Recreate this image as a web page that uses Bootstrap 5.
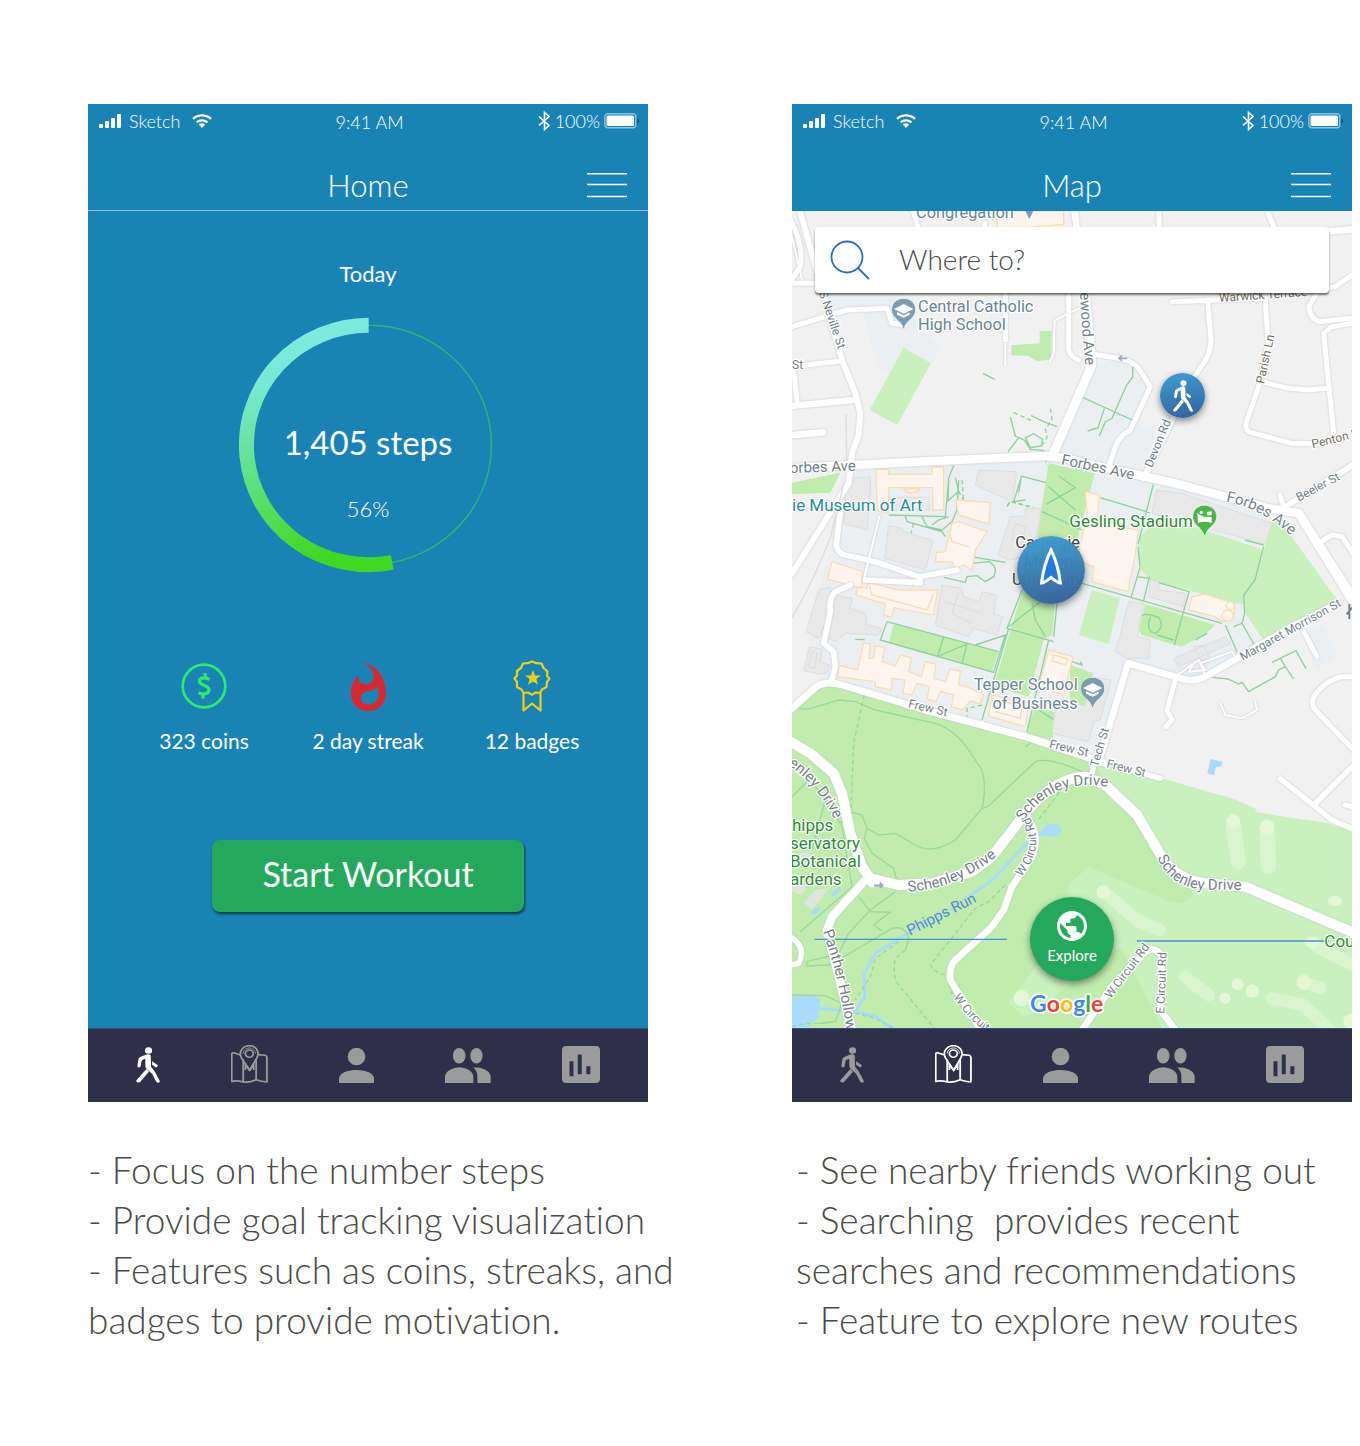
<!DOCTYPE html>
<html lang="en">
<head>
<meta charset="utf-8">
<meta name="viewport" content="width=device-width, initial-scale=1">
<title>Workout app screens</title>
<link href="https://cdn.jsdelivr.net/npm/bootstrap@5.3.0/dist/css/bootstrap.min.css" rel="stylesheet">
<style>
  body { font-family: Lato, "Open Sans", sans-serif; font-variant-ligatures: none; background: #fff; color: #4a4a4a; }
  svg { display: block; }
  .board { gap: 144px; padding: 104px 8px 96px 88px; }
  .board > section { flex: 1 1 0; min-width: 0; }
  .screen { background: #1a83b6; color: #fff; }
  .topbar { height: 107px; }
  .topbar-line { border-bottom: 1px solid #8cc4e0; }
  .status { font-size: 18px; font-weight: 300; line-height: 30px; padding: 0 8px 0 11px; }
  .status-side { flex: 1 1 0; }
  .status-time { padding-top: 3px; }
  .title-row { padding: 30px 21px 0; }
  .title-row h1 { font-size: 31px; font-weight: 300; line-height: 36px; }
  .title-row button, .title-side { width: 40px; }
  .pane { height: 817px; }
  .today { font-size: 22px; line-height: 28px; padding-top: 49px; }
  .ring { width: 260px; margin-top: 29px; }
  .ring-text { padding-top: 104px; }
  .steps { font-size: 33px; line-height: 42px; }
  .percent { font-size: 22px; font-weight: 300; line-height: 28px; padding-top: 32px; }
  .stats { padding: 136px 34px 0; }
  .stats span { font-size: 21px; line-height: 28px; }
  .stat-icon { height: 54px; margin-bottom: 14px; }
  .start { width: 312px; height: 72px; margin-top: 85px; padding: 0 0 4px; font-size: 34px; line-height: 40px; color: #fff; background: #24a85c; border: 0; border-radius: 8px; box-shadow: 1px 2px 3px rgba(0,0,0,.6); }
  .tabs { height: 74px; background: #302f4a; padding: 0 48px 19px; border-top: 1px solid #235b80; color: #9b9b9b; }
  .tabs a { color: inherit; }
  .tabs a.active { color: #fff; }
  .notes { font-size: 37px; font-weight: 300; line-height: 50px; padding-top: 43px; }
  .search { height: 66px; margin: 16px 23px; padding-left: 15px; background: #fff; border-radius: 4px; box-shadow: 0 2px 2px rgba(0,0,0,.55); }
  .search input { border: 0; box-shadow: none; font-size: 28px; font-weight: 300; color: #4a4a4a; padding: 0 0 2px 29px; background: transparent; }
  .search input::placeholder { color: #4a4a4a; opacity: 1; }
  .pin { border: 0; padding: 0; color: #fff; border-radius: 50%; background: linear-gradient(170deg, #3f9fd2, #32609c); box-shadow: 0 3px 7px rgba(0,0,0,.45); }
  .pin-friend { width: 45px; height: 45px; left: 368px; top: 162px; }
  .pin-me { width: 68px; height: 68px; left: 225px; top: 325px; background: linear-gradient(170deg, rgba(61,160,212,.96), rgba(50,90,150,.96)); }
  .pin-explore { width: 84px; height: 84px; left: 50%; margin-left: -42px; bottom: 47px; padding-bottom: 5px; background: #24a85c; font-size: 15px; line-height: 22px; }
  .map text { font-family: Roboto, sans-serif; paint-order: stroke; stroke: #fff; stroke-width: 7px; stroke-linejoin: round; fill: #73818a; }
  .map .lbl { font-size: 45px; }
  .map .street { font-size: 36px; }
  .map .place { font-size: 49px; fill: #6b8594; }
  .map .lane { font-size: 36px; fill: #756c61; }
  .map .park { font-size: 51px; fill: #2f8a35; }
  .map .museum { fill: #2a8c94; }
  .map .campus { font-size: 49px; fill: #444; }
  .map .run { fill: #5686dc; stroke: #c0ecae; }
  .map .google { font-size: 69px; font-family: Lato, sans-serif; font-weight: 700; stroke-width: 10px; }
  .roads { fill: none; stroke: #fff; stroke-linejoin: round; stroke-linecap: round; filter: drop-shadow(0 0 3px #c4c4cc); }
  .trail { fill: none; stroke: #8fd09b; stroke-width: 4px; }
  .trail-soft { fill: none; stroke: #9cd79a; stroke-width: 4px; }
  .dash { stroke-dasharray: 13 9; }
  .grey { fill: #e9e9ea; stroke: #dededf; stroke-width: 3px; }
  .cream { fill: #fef6ee; stroke: #fcdcb6; stroke-width: 4px; }
  .deep { fill: #c0ecae; }
  .pale { fill: #c9f0bd; }
  .quad { fill: #ebeff2; }
  .water { fill: #aadaff; }
  .tee { fill: #e5f8d5; }
</style>
<script src="https://cdn.jsdelivr.net/npm/bootstrap@5.3.0/dist/js/bootstrap.bundle.min.js"></script>
</head>
<body>
<svg width="0" height="0" class="position-absolute" aria-hidden="true">
  <defs>
    <symbol id="i-signal" viewBox="0 0 22 14"><g fill="currentColor"><rect y="10" width="4" height="4" rx="1"/><rect x="6" y="7" width="4" height="7" rx="1"/><rect x="12" y="4" width="4" height="10" rx="1"/><rect x="18" width="4" height="14" rx="1"/></g></symbol>
    <symbol id="i-wifi" viewBox="0 0 20 14"><path d="M1 4.800A13.500 13.500 0 0 1 19 4.800M4.500 8.300A8.500 8.500 0 0 1 15.500 8.300" fill="none" stroke="currentColor" stroke-width="2.300"/><path d="M6.800 10.600a5 5 0 0 1 6.400 0L10 14z" fill="currentColor"/></symbol>
    <symbol id="i-bt" viewBox="0 0 13 20"><path d="M1 5.500 11 14.500 6.500 18.500V1.500L11 5.500 1 14.500" fill="none" stroke="currentColor" stroke-width="1.600"/></symbol>
    <symbol id="i-battery" viewBox="0 0 36 16"><rect x=".8" y=".8" width="31" height="14" rx="3" fill="none" stroke="#8cc4e0" stroke-width="1.400"/><rect x="2.500" y="2.500" width="27.500" height="10.600" rx="1.500" fill="#fff"/><path d="M33.500 5.500c2 .6 2 4.400 0 5z" fill="#0d415b"/></symbol>
    <symbol id="i-menu" viewBox="0 0 40 26"><path d="M0 1.800H40M0 12.500H40M0 24.500H40" stroke="#fff" stroke-width="1.600"/></symbol>
    <symbol id="i-walk" viewBox="134 80 67 108" preserveAspectRatio="none"><circle cx="169" cy="90.500" r="10"/><path d="M161 103Q169 99 175 105L176 139L185 151Q190 160 200 181Q202 187 196 187Q191 187 189 181L179 160L164 146Q160 142 160 136V115L150 120L147 138Q145 142 141 141Q137 140 138 135L141 116Q142 112 146 110ZM179 123 193 133Q196 136 193 140Q191 142 187 139L179 133ZM163 146 170 154 146 184Q142 188 137 186Q133 183 136 179Z"/></symbol>
    <symbol id="i-map" viewBox="400 74 103 115" preserveAspectRatio="none"><g fill="none" stroke="currentColor" stroke-width="5" stroke-linejoin="round"><path d="M427 104 409 98Q402 96 402 103V184Q418 180 434 186Q452 188 470 179Q484 184 500 186V112Q500 107 495 105L474 103M434 118V186M470 118V179"/><path d="M452 151 429 113Q422 97 431 86Q438 76 451 76Q464 76 471 86Q479 98 472 113Z"/><circle cx="451" cy="100" r="11"/><path d="M434 100a17 17 0 0 1 34 0" stroke-width="2.500"/><path d="M440 150V132L452 151 463 132V150"/></g></symbol>
    <symbol id="i-person" viewBox="702 84 97 104" preserveAspectRatio="none"><ellipse cx="750.500" cy="109.500" rx="24.500" ry="26"/><path d="M702 188V174C704 155 730 149 751 149C773 149 798 157 799 174V188Z"/></symbol>
    <symbol id="i-group" viewBox="999 84 128 104" preserveAspectRatio="none"><ellipse cx="1038.500" cy="107" rx="17.500" ry="23"/><ellipse cx="1086.500" cy="107" rx="17" ry="23"/><path d="M999 188V168C1001 150 1022 142 1039 141C1056 142 1076 151 1078 168V188ZM1089 188V168Q1089 152 1078 141C1099 141 1125 150 1126 168V188Z"/></symbol>
    <symbol id="i-chart" viewBox="1329 78 106 110" preserveAspectRatio="none"><path fill-rule="evenodd" d="M1341 78H1423Q1435 78 1435 90V176Q1435 188 1423 188H1341Q1329 188 1329 176V90Q1329 78 1341 78ZM1350 123V168H1361V123ZM1373 103V162H1384V103ZM1397 138V162H1408V138Z"/></symbol>
    <symbol id="m-school" viewBox="0 0 70 92"><path d="M35 0C12 0 0 16 0 33C0 58 27 62 35 90C43 62 70 58 70 33C70 16 58 0 35 0Z" fill="#7a9db3"/><path d="M6 31 35 16 64 31 35 45ZM15 40 35 50 53 41V48L35 57 15 48Z" fill="#fff"/></symbol>
  </defs>
</svg>

<main class="board d-flex">
  <section>
    <div class="screen">
      <header class="topbar topbar-line">
        <div class="status d-flex text-nowrap">
          <div class="status-side d-flex align-items-center gap-2"><svg width="22" height="14"><use href="#i-signal"/></svg><span>Sketch</span><svg class="ms-1" width="20" height="14"><use href="#i-wifi"/></svg></div>
          <div class="status-time">9:41 AM</div>
          <div class="status-side d-flex align-items-center justify-content-end gap-1"><svg width="13" height="20"><use href="#i-bt"/></svg><span>100%</span><svg width="36" height="16"><use href="#i-battery"/></svg></div>
        </div>
        <div class="title-row d-flex align-items-center justify-content-between">
          <span class="title-side"></span><h1 class="m-0">Home</h1><button class="btn p-0 border-0" aria-label="Menu"><svg width="40" height="26"><use href="#i-menu"/></svg></button>
        </div>
      </header>
      <div class="pane d-flex flex-column align-items-center">
        <div class="today">Today</div>
        <div class="ring position-relative text-center">
          <svg class="position-absolute top-0 start-0" width="260" height="256" viewBox="238 317 260 256" aria-hidden="true">
            <defs><linearGradient id="arc" x1=".2" y1="0" x2=".45" y2="1"><stop offset="0" stop-color="#82ece6"/><stop offset=".2" stop-color="#7ae8d4"/><stop offset=".9" stop-color="#46da33"/><stop offset="1" stop-color="#40d822"/></linearGradient></defs>
            <path d="M368.700 325.300A122.500 119.700 0 0 1 392.300 562.500" fill="none" stroke="#2bb673" stroke-width="1.500"/>
            <path d="M368.700 325.300A122.500 119.700 0 1 0 392.300 562.500" fill="none" stroke="url(#arc)" stroke-width="15"/>
          </svg>
          <div class="ring-text position-relative"><div class="steps">1,405 steps</div><div class="percent">56%</div></div>
        </div>
        <div class="stats w-100"><div class="row g-0 text-center">
          <div class="col"><div class="stat-icon d-flex justify-content-center align-items-center">
            <svg width="46" height="46" viewBox="0 0 46 46" fill="none" stroke="#2deb6a"><circle cx="23" cy="23" r="21.300" stroke-width="2.700"/><path d="M28.500 16.500C23 13.500 18 15 18.500 18.800C19 22.800 27.800 22 28 27C28 31 22 32 17.500 29.800M24.200 10V15M22 31V35.500" stroke-width="3.200"/></svg></div><span>323 coins</span></div>
          <div class="col"><div class="stat-icon d-flex justify-content-center align-items-center">
            <svg width="35" height="49" viewBox="636 59 104 147" preserveAspectRatio="none"><path fill="#d8282f" fill-rule="evenodd" d="M671 59C711 69 740 104 740 152C740 185 718 206 688 206C657 206 636 185 636 155C636 132 643 114 658 99C656 116 664 126 680 126C692 126 702 119 703 105C703 88 692 70 671 59ZM715 131C705 147 691 144 677 150C669 154 665 160 665 168C666 179 675 186 688 186C704 186 716 176 718 160Q719 146 715 131Z"/></svg></div><span>2 day streak</span></div>
          <div class="col"><div class="stat-icon d-flex justify-content-center align-items-center">
            <svg width="38" height="52" viewBox="0 0 38 52" fill="none" stroke="#f1d011" stroke-width="2.200" stroke-linejoin="round"><path d="M19 1.500 23.500 3.200 28.500 3.500 30.500 8 34.500 11.500 34 16 36.500 18.500 34 22 33.500 27 29 29.500 27 33 22.500 32.500 19 34.800 15 32.500 10.500 33 8.500 29.500 4 27 4 22 1.500 18.500 4 15.500 4 11 8 8 10 3.500 14.500 3.200ZM10.500 33V50.500L19 43.500 27.500 50.500V33"/><path d="M20 10 22 15.500H28L23.300 19 25 24.700 20 21.400 15 24.700 16.700 19 12 15.500H18Z" fill="#ebcf18" stroke="none"/></svg></div><span>12 badges</span></div>
        </div></div>
        <button class="start btn">Start Workout</button>
      </div>
      <nav class="tabs d-flex justify-content-between align-items-end" aria-label="Home tabs">
        <a href="#" class="active" aria-label="Workout"><svg width="24" height="36" fill="currentColor"><use href="#i-walk"/></svg></a>
        <a href="#" aria-label="Map"><svg width="37" height="38"><use href="#i-map"/></svg></a>
        <a href="#" aria-label="Profile"><svg width="35" height="35" fill="currentColor"><use href="#i-person"/></svg></a>
        <a href="#" aria-label="Friends"><svg width="46" height="35" fill="currentColor"><use href="#i-group"/></svg></a>
        <a href="#" aria-label="Stats"><svg width="38" height="37" fill="currentColor"><use href="#i-chart"/></svg></a>
      </nav>
    </div>
    <div class="notes text-nowrap">- Focus on the number steps<br>- Provide goal tracking visualization<br>- Features such as coins, streaks, and<br>badges to provide motivation.</div>
  </section>

  <section>
    <div class="screen">
      <header class="topbar">
        <div class="status d-flex text-nowrap">
          <div class="status-side d-flex align-items-center gap-2"><svg width="22" height="14"><use href="#i-signal"/></svg><span>Sketch</span><svg class="ms-1" width="20" height="14"><use href="#i-wifi"/></svg></div>
          <div class="status-time">9:41 AM</div>
          <div class="status-side d-flex align-items-center justify-content-end gap-1"><svg width="13" height="20"><use href="#i-bt"/></svg><span>100%</span><svg width="36" height="16"><use href="#i-battery"/></svg></div>
        </div>
        <div class="title-row d-flex align-items-center justify-content-between">
          <span class="title-side"></span><h1 class="m-0">Map</h1><button class="btn p-0 border-0" aria-label="Menu"><svg width="40" height="26"><use href="#i-menu"/></svg></button>
        </div>
      </header>
      <div class="pane position-relative overflow-hidden">
        <svg class="map position-absolute top-0 start-0 w-100 h-100" viewBox="0 0 1680 2451" preserveAspectRatio="xMidYMid slice">
          <rect width="1680" height="2451" fill="#f1f1f1"/>
          <!-- campus ground -->
          <g class="quad">
            <path d="M110 250H330L380 345 450 407 400 485 265 490 240 407 210 300 110 297Z"/>
            <path d="M894 457 1024 447 1079 527 1014 667 944 767 784 747ZM994 680 1014 635 1094 647 1054 790 950 767Z"/>
            <path d="M165 770 770 745 1050 800 1440 910 1420 1000 1354 1207 1400 1290 1340 1350 1210 1410 1000 1360 910 1620 700 1560 110 1410 40 1330 80 1150 140 900Z"/>
            <path d="M1524 1257 1594 1247 1639 1332 1574 1377Z"/>
          </g>
          <!-- park -->
          <path class="pale" d="M0 1507 75 1427 120 1417 770 1602 1109 1702 1334 1767 1389 1792 1394 1804 1609 1837 1680 1862V2451H0Z"/>
          <path class="deep" d="M0 1507 75 1427 120 1417 770 1602 900 1640 934 1707 1044 1817 1204 2047Q1190 2085 1134 2072L889 1967 834 2017 780 2200 650 2377 700 2420 984 2207 1034 2297 1110 2451H0Z"/>
          <path class="pale" d="M335 410 417 457 315 642 233 597ZM1039 1027 1044 977 1074 947 1134 927 1234 957 1414 1017 1389 1107 1354 1152 1356 1182 1074 1107 1044 1072ZM1434 937 1459 922 1634 1165 1414 1287 1359 1207 1356 1152 1389 1107 1419 1007ZM899 1137 984 1162 949 1299 861 1272Z"/>
          <path class="deep" d="M658 403 743 397V360H778V445L735 451 710 435 658 433ZM0 815 145 785 115 845 0 850Z"/>
          <g transform="translate(0 807)"><path class="deep" d="M770-50 908-20 855 180 870 330 790 370 780 465 755 480 710 650 605 620 690 335 735 170ZM730 680 800 700 780 780 700 760ZM305 432 620 515 600 575 290 490ZM834 555 904 580 874 690 834 680ZM1059 372 1269 435 1244 460 1169 500 1049 465 1041 450Z"/></g>
          <!-- golf course -->
          <g transform="translate(834 1617)">
            <path d="M490 230 505 335M592 250 595 350" stroke="#d9f4cf" stroke-width="46" stroke-linecap="round" fill="none"/>
            <path d="M120 440 200 510 270 540M345 680 415 735M605 745 700 765 790 850M705 700 750 712M740 590 860 650" stroke="#d9f4cf" stroke-width="38" stroke-linecap="round" fill="none"/>
            <g class="tee"><circle cx="490" cy="214" r="21"/><circle cx="591" cy="232" r="23"/><circle cx="100" cy="426" r="21"/><circle cx="503" cy="703" r="18"/><circle cx="547" cy="723" r="20"/><circle cx="465" cy="745" r="17"/><circle cx="702" cy="697" r="22"/><ellipse cx="795" cy="453" rx="22" ry="15"/><ellipse cx="728" cy="577" rx="24" ry="17"/><circle cx="845" cy="815" r="25"/><circle cx="-145" cy="745" r="24"/></g>
          </g>
          <!-- water -->
          <g transform="translate(0 1617)">
            <path class="water" d="M0 740 70 738 85 750 80 800 50 830 0 835ZM745 248 765 222 800 225 812 242 790 260 750 258ZM1256 27 1292 35 1287 50 1272 50 1266 76 1246 70ZM116 432 140 410 148 420 124 442ZM56 488 80 467 88 476 66 497Z"/>
            <path d="M750 248 715 270 600 390 480 475 340 555 250 610 217 670 218 740 190 785 80 775M190 785 250 800 310 840" fill="none" stroke="#aadaff" stroke-width="9"/>
          </g>
          <!-- footpaths -->
          <g class="trail-soft" transform="translate(0 1617)">
            <path d="M20-125 45-122 140-150 190-145 250-120 430-80Q490-60 530 0L570 60Q585 110 570 175L490 270Q420 315 370 285L310 250 260 255 225 235 210 195 180 187 145 220M570 175 590 168 730 35Q770 20 870 65M225 235 217 265 240 310 305 355 315 395M45 75 100 150 150 230 180 410 25 545M0 140 45 95M100 150 60 300M310 425 235 480 170 550 140 610 45 635 45 648 110 645 190 600 300 535Q345 525 350 570L340 600M200 440 235 485 295 487 250 520 245 525 270 543M0 735 100 737 150 760 130 815 80 820M700-10 730-30 790-25 870 10"/>
            <path class="dash" d="M217-165 185-20 177 180M815 110 735 215M640 405 590 455 550 475 415 645Q430 670 465 675L480 735 570 850M320 575 250 625 235 680 190 750M340 600 310 625Q300 680 320 705L440 850M190 790 250 805 310 840M0 830 40 820 110 820"/>
          </g>
          <g class="trail">
            <path d="M573 487 608 505M655 618 670 675 680 680 648 722M680 680 698 688 715 715 755 718M720 615 755 632 795 647M700 680 725 668 752 685 748 705 715 710ZM486 762 470 800 468 870 500 840 490 800M680 845 688 795 762 815M800 795 850 830 762 880M867 557 1021 627M1022 467 1022 498 1004 522 960 622 940 632 922 675M937 592 918 650 887 660M1084 820 1038 1000M925 860 1074 905"/>
            <path class="dash" d="M665 605 715 627 720 612M775 593 780 625 760 655 765 680 745 710M755 720 765 765M500 840 515 870M645 885 655 870 725 890"/>
            <g transform="translate(0 807)"><path d="M290 105 460 110 470 0M340 108 345 125 450 155 460 170M390 110 405 140 450 150 480 125 495 90 500 0M420 135 440 120 470 110M525 228 640 247M540 250 590 245Q620 260 605 290L580 305 555 287 525 290 520 307 455 292M285 425 265 480 605 577 640 465 550 495M285 425 620 515M455 470 437 530 525 492 510 550M190 478 218 479M690 330 645 445 785 485M700 60 665 65 685 0M650 440 790 330M720 370 730 420 760 470M650 445 570 720M770 480 705 755M740 690 795 725M785 470 795 370M750 95 870 150M770 20 850 90M1074 300 1191 335 1147 495M870 310 1290 430M1044 262 1018 350M1072 290 1055 362M1034 290 1074 295M1044 260 1038 200M1359 180 1415 195M1415 200 1389 300 1355 345 1358 400 1350 430 1325 440M1045 410Q1055 395 1100 412Q1120 440 1090 460Q1060 455 1075 410M1095 465 1145 480M1300 435 1335 515M1350 430 1387 495M1210 480 1245 460M1262 592 1307 597 1340 612 1350 607 1370 635 1450 590 1460 570 1480 560 1465 535 1440 547 1512 512 1542 566M1480 560 1505 597M840 545 870 555 865 545"/><path class="dash" d="M510 0 515 60M645 80 655 65 715 80M365 130 357 160M570 675 525 685 525 710"/></g>
          </g>
          <!-- buildings -->
          <g class="cream">
            <path d="M615 0V50L725 48 815 40V0ZM252 775H290V790H420V768H455V897H422V830H290V905L255 900Z"/>
            <g transform="translate(0 807)">
              <path d="M335 27a27 20 0 0 0 48 0ZM120 245 212 275 207 325 107 297ZM197 320 225 325 228 308 320 330 437 330 425 405 305 383 300 412 275 405 280 372 192 345ZM492 60 595 68 590 132 500 105ZM480 130 500 125 585 155 550 210 540 270 515 255 490 265 480 245 430 245 433 218 460 215Z"/>
              <path d="M215 488 235 492 230 535 245 535 250 497 278 503 270 545 310 558 325 525 358 533 350 575 388 590 400 545 432 553 425 595 460 605 475 567 505 573 500 615 530 622 575 645 565 672 535 662 512 690 478 680 485 645 445 633 432 665 405 658 412 620 375 610 360 645 333 640 340 600 300 595 298 630 250 620 250 605 135 590 142 557 197 570Z"/>
              <path d="M600 645 710 672 700 740 590 708ZM770 510 843 530 815 645 740 620Z"/>
              <path d="M880 35 923 45 915 130 1040 150 1028 235 1020 270 1008 335 900 305 905 260 855 240 885 100ZM1200 350 1240 342 1330 372 1325 410Q1300 440 1270 410L1190 390Z"/><circle cx="1307" cy="407" r="17"/><circle cx="1315" cy="377" r="12"/>
              <path d="M230 310 240 345 405 390 425 340M620 660 690 680 685 715 610 695M785 525 828 537 820 555 780 543ZM470 150 480 185 530 200" fill="none"/>
            </g>
          </g>
          <g class="grey" transform="translate(0 807)">
            <path d="M165-5 235-10V40L225 150 155 130ZM295 52H412V90H295ZM290 137 330 145 335 155 423 182 400 270 278 235ZM560-30 675-25 660 65 550 15ZM655 110 700 108V85H745V110L725 200 700 230 650 240 618 225ZM80 330 115 320 120 345 180 355 175 385 220 400 225 435 270 445 260 465 160 460 130 485 100 470 105 420 80 475 42 455ZM53 500 90 508 85 545 112 555 105 580 80 582 35 572ZM450 315 510 325 515 350 560 365 570 335 613 345 605 400 632 410 615 465 545 445 530 470 430 435Z"/>
            <path d="M834 665 880 680 895 590 957 600 925 720 905 725 890 785 780 760 790 690ZM1094 30 1170 40 1440 130 1420 192 1080 100ZM1075 300 1100 305V330L1180 340 1175 380 1070 350ZM1010 365 1055 370 1035 470 1075 480 1070 535H1005L970 515 985 465ZM1145 535 1300 470 1315 490 1160 560ZM1205 500 1235 495 1255 540 1235 555Z"/>
            <path d="M60 515 75 520 68 565 48 560ZM670 130 700 140 690 190 660 180ZM500 340 480 400 540 430M460 365 570 400" fill="none"/>
          </g>
          <g fill="#dfe5dd" transform="translate(0 1617)"><path d="M0 400 45 405 30 435 0 425ZM35 460 70 420 110 415 60 480Z"/><circle cx="38" cy="330" r="22"/></g>
          <!-- roads -->
          <g class="roads">
            <g transform="translate(0 -33)">
              <path stroke-width="15" d="M-5 60Q35 130 25 200L-5 245M0 250H90M0 380 165 330 285 325 300 370 340 375M-5 500 150 483M5 510 15 605M360 20 380 90M578 70V90M640 270V420M830 275V450Q835 470 860 480M885 460 980 475Q1015 480 1040 505L1075 560 1015 690Q980 710 970 740L950 800M1100 20 1102 90M1420 20 1450 90M1247 300 1256 410Q1260 450 1235 490L1200 540M1140 305 1420 295M1420 295 1422 340 1428 430 1400 560 1365 660Q1355 690 1375 697L1500 730 1580 732M1420 548 1480 563 1545 570 1605 565M1680 370 1620 380 1595 400 1625 700M1680 225 1630 260 1580 270 1550 320Q1555 355 1580 365L1680 355"/>
              <path stroke-width="6" d="M640 430V495M860 325 788 362 785 460 773 485M0 110 30 240"/>
              <path stroke-width="20" d="M-5 618 185 600M-5 706 92 697M846 20 880 300M1600 95 1680 88"/>
              <path stroke-width="18" d="M20 20 150 480 190 580 205 640 200 705 180 760 170 850 0 1120"/>
              <path stroke-width="27" d="M780 770 900 495 880 280"/>
              <path stroke-width="26" d="M-5 805 420 783 760 768Q820 772 900 795L1150 850 1430 925 1520 940 1680 1200"/>
              <path stroke-width="17" d="M1055 835 1200 540M1480 920 1690 790"/>
            </g>
            <g transform="translate(0 807)">
              <path stroke-width="17" d="M145 100 133 190Q135 220 160 225L250 245 380 290 495 270M375 310 390 290M220 300 385 308M175 315 130 335Q110 355 115 395L95 490 125 515 130 560 118 605"/>
              <path stroke-width="6" d="M262 110 215 300M1150 590 1220 540 1240 570 1190 575 1200 560M1240 590 1225 550 1320 515 1335 540M1285 670 1300 705 1350 715 1395 690 1390 665"/>
              <path stroke-width="21" d="M-5 690 70 622Q100 600 150 615L400 690 700 770 940 850"/>
              <path stroke-width="20" d="M925 830 1008 550 1150 590Q1200 610 1240 590L1500 440 1640 370"/>
              <path stroke-width="15" d="M1150 600 1125 690 1140 720 1122 740M1535 455 1575 530M1464 45 1475 80M1570 195 1620 165 1650 170 1690 230M1690 590 1650 590Q1600 600 1565 650Q1555 670 1570 690L1690 815"/>
              <path stroke-width="26" d="M1520 100 1700 380"/>
            </g>
            <g transform="translate(0 1617)">
              <path stroke-width="30" d="M-5-25 55 10 125 70 150 130 175 250 210 350 235 385 320 405 420 400 540 365 600 320 700 190Q790 80 880 80L940 105 1035 195 1115 330Q1160 390 1240 400L1360 410 1500 470 1690 550"/>
              <path stroke-width="25" d="M220 390 120 500 105 540 180 840M225 375 240 400"/>
              <path stroke-width="20" d="M700 200Q750 250 720 320L660 410 635 480 600 530 490 630Q470 650 475 690L560 830 590 860M870 840 960 710 1060 605Q1090 585 1110 620L1105 780 1150 840"/>
              <path stroke-width="16" d="M900 70 915 10M1000 55 1105 85M1465 87 1570 170 1620 210 1690 240M1568 162 1690 40M1660 165 1690 172M-5 560Q45 590 20 640L-5 645"/>
            </g>
          </g>
          <path d="M0 1220Q60 1120 115 980L155 820M162 610 164 750" fill="none" stroke="#dcdcdc" stroke-width="4"/>
          <g fill="none" stroke="#a3a3c9" stroke-width="5"><path d="M1006 442H980M990 434 981 442 990 450M246 2023H272M263 2015 272 2023 263 2031"/></g>
          <!-- rules either side of the explore button -->
          <path d="M68 2185H645M1035 2190H1611" stroke="#4a90d9" stroke-width="4"/>
          <!-- labels -->
          <defs>
            <path id="p1" d="M80 245 150 450"/><path id="p2" d="M864 245Q868 350 882 480"/><path id="p3" d="M1302 872Q1410 890 1510 985"/>
            <path id="p4" d="M1352 1350 1660 1178"/><path id="p5" d="M-12 1662Q70 1715 125 1820"/><path id="p6" d="M348 2042Q500 2035 630 1922"/>
            <path id="p7" d="M694 1832Q780 1700 940 1727"/><path id="p8" d="M1096 1940Q1140 2040 1260 2036L1380 2037"/><path id="p9" d="M92 2162Q140 2290 165 2470"/>
            <path id="p10" d="M688 1998Q770 1900 700 1795"/><path id="p11" d="M484 2358Q530 2430 600 2475"/><path id="p12" d="M956 2365 1086 2192"/>
          </defs>
          <text class="place" x="372" y="20">Congregation</text>
          <text class="place" x="378" y="302">Central Catholic</text><text class="place" x="378" y="357">High School</text>
          <text class="street"><textPath href="#p1">S Neville St</textPath></text>
          <text class="street" x="0" y="475">St</text>
          <text class="lbl" transform="translate(-6 786) rotate(-2)">orbes Ave</text>
          <text class="lbl"><textPath href="#p2">ewood Ave</textPath></text>
          <text class="lane" transform="translate(1282 273) rotate(-4)">Warwick Terrace</text>
          <text class="lane" transform="translate(1416 520) rotate(-78)">Parish Ln</text>
          <text class="lane" transform="translate(1562 712) rotate(-14)">Penton Rd</text>
          <text class="street" transform="translate(1520 872) rotate(-28)">Beeler St</text>
          <text class="street" transform="translate(1080 772) rotate(-68)">Devon Rd</text>
          <text class="lbl" transform="translate(806 760) rotate(12)">Forbes Ave</text>
          <text class="lbl"><textPath href="#p3">Forbes Ave</textPath></text>
          <text class="park museum" x="0" y="900">ie Museum of Art</text>
          <text class="park" x="832" y="947">Gesling Stadium</text>
          <text class="campus" x="670" y="1012">Carnegie</text><text class="campus" x="695" y="1069">Mellon</text><text class="campus" x="660" y="1122">University</text>
          <text class="place" x="857" y="1436" text-anchor="end">Tepper School</text><text class="place" x="857" y="1493" text-anchor="end">of Business</text>
          <text class="street" transform="translate(347 1489) rotate(13)">Frew St</text>
          <text class="street" transform="translate(770 1610) rotate(13)">Frew St</text>
          <text class="street" transform="translate(942 1669) rotate(14)">Frew St</text>
          <text class="street" transform="translate(918 1670) rotate(-74)">Tech St</text>
          <text class="street"><textPath href="#p4">Margaret Morrison St</textPath></text>
          <text class="lbl"><textPath href="#p5">enley Drive</textPath></text>
          <text class="lbl"><textPath href="#p6">Schenley Drive</textPath></text>
          <text class="lbl"><textPath href="#p7">Schenley Drive</textPath></text>
          <text class="lbl"><textPath href="#p8">Schenley Drive</textPath></text>
          <text class="lbl"><textPath href="#p9">Panther Hollow</textPath></text>
          <text class="street"><textPath href="#p10">W Circuit Rd</textPath></text>
          <text class="street"><textPath href="#p11">W Circuit</textPath></text>
          <text class="street"><textPath href="#p12">W Circuit Rd</textPath></text>
          <text class="street" transform="translate(1117 2408) rotate(-88)">E Circuit Rd</text>
          <text class="park" x="0" y="1860">hipps</text><text class="park" x="-6" y="1914">servatory</text><text class="park" x="-6" y="1969">Botanical</text><text class="park" x="-6" y="2023">ardens</text>
          <text class="lbl run" transform="translate(354 2174) rotate(-27)">Phipps Run</text>
          <text class="park" x="1597" y="2207">Cou</text>
          <path d="M1680 1190 1664 1210M1672 1180V1224" stroke="#73818a" stroke-width="6"/>
          <use href="#m-school" x="300" y="263" width="70" height="92"/>
          <use href="#m-school" x="867" y="1400" width="70" height="92"/>
          <path d="M712 24 700 0H724Z" fill="#7a9db3"/>
          <g transform="translate(1203 884)"><path d="M35 0C12 0 0 16 0 33C0 58 27 62 35 90C43 62 70 58 70 33C70 16 58 0 35 0Z" fill="#4cb748"/><path d="M13 22Q22 30 34 33L56 35V52Q35 45 15 52Z" fill="#fff"/><circle cx="25" cy="20" r="5" fill="#fff"/><path d="M41 19 56 17V28L44 30Z" fill="#fff"/></g>
          <text class="google" x="714" y="2402"><tspan fill="#4285f4">G</tspan><tspan fill="#ea4335">o</tspan><tspan fill="#fbbc05">o</tspan><tspan fill="#4285f4">g</tspan><tspan fill="#34a853">l</tspan><tspan fill="#ea4335">e</tspan></text>
        </svg>
        <form class="search d-flex align-items-center position-relative">
          <label for="where" aria-label="Search"><svg width="40" height="40" viewBox="0 0 40 40" fill="none" stroke="#2a6fbe" stroke-width="1.800"><circle cx="17" cy="17" r="15.500"/><path d="M27.500 27.500 39 39"/></svg></label>
          <input id="where" class="form-control" type="search" placeholder="Where to?">
        </form>
        <button class="pin pin-friend position-absolute d-flex justify-content-center align-items-center" aria-label="Friend walking"><svg width="20" height="32" fill="currentColor"><use href="#i-walk"/></svg></button>
        <button class="pin pin-me position-absolute d-flex justify-content-center align-items-center" aria-label="My position"><svg class="mb-2" width="26" height="42" viewBox="0 0 26 42"><path d="M13 5Q20 19 22.500 38 20 38 13 32.500 6 38 3.500 38 6 19 13 5Z" fill="#2478dc" stroke="#fff" stroke-width="3" stroke-miterlimit="3"/></svg></button>
        <button class="pin pin-explore position-absolute d-flex flex-column justify-content-center align-items-center"><svg width="36" height="36" viewBox="0 0 24 24" fill="currentColor"><path d="M12 2C6.480 2 2 6.480 2 12s4.480 10 10 10 10-4.480 10-10S17.520 2 12 2zm-1 17.930c-3.950-.49-7-3.850-7-7.930 0-.62.080-1.210.21-1.790L9 15v1c0 1.100.9 2 2 2v1.930zm6.900-2.540c-.26-.81-1-1.390-1.900-1.390h-1v-3c0-.55-.45-1-1-1H8v-2h2c.55 0 1-.45 1-1V7h2c1.100 0 2-.9 2-2v-.41c2.930 1.190 5 4.060 5 7.410 0 2.080-.8 3.970-2.100 5.390z"/></svg>Explore</button>
      </div>
      <nav class="tabs d-flex justify-content-between align-items-end" aria-label="Map tabs">
        <a href="#" aria-label="Workout"><svg width="24" height="36" fill="currentColor"><use href="#i-walk"/></svg></a>
        <a href="#" class="active" aria-label="Map"><svg width="37" height="38"><use href="#i-map"/></svg></a>
        <a href="#" aria-label="Profile"><svg width="35" height="35" fill="currentColor"><use href="#i-person"/></svg></a>
        <a href="#" aria-label="Friends"><svg width="46" height="35" fill="currentColor"><use href="#i-group"/></svg></a>
        <a href="#" aria-label="Stats"><svg width="38" height="37" fill="currentColor"><use href="#i-chart"/></svg></a>
      </nav>
    </div>
    <div class="notes text-nowrap ps-1">- See nearby friends working out<br>- Searching&nbsp; provides recent<br>searches and recommendations<br>- Feature to explore new routes</div>
  </section>
</main>
</body>
</html>
